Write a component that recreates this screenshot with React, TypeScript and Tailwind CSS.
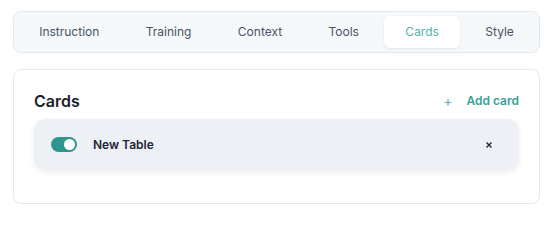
import React from 'react';

const tabs = ['Instruction', 'Training', 'Context', 'Tools', 'Cards', 'Style'];

const App = () => {
  const active = 'Cards';
  return (
    <div className="min-h-screen bg-white pl-[13px] pr-[15px] pt-[11px] font-['Inter','Liberation_Sans',sans-serif]">
      {/* Tabs */}
      <div className="flex gap-1 rounded-lg border border-[#e3e8ee] bg-[#f5f8fb] p-1">
        {tabs.map((t) => (
          <button
            key={t}
            className={`flex-auto rounded-md py-1.5 text-xs leading-5 ${
              t === active
                ? 'bg-white text-[#4fb3b0] shadow-[0_1px_3px_rgba(0,0,0,0.08)]'
                : 'text-[#4b5260]'
            }`}
          >
            {t}
          </button>
        ))}
      </div>

      {/* Cards panel */}
      <div className="mt-4 rounded-lg border border-[#e6e8eb] bg-white px-5 pb-[33px] pt-[19px]">
        <div className="mb-1.5 flex items-center justify-between">
          <h2 className="text-base font-semibold leading-6 text-[#1c1d2b]">Cards</h2>
          <button className="flex items-center gap-3.5 text-xs font-semibold text-[#3a9f9b]">
            <span className="text-sm font-normal text-[#5bb5b0]">+</span>
            Add card
          </button>
        </div>

        <div className="flex h-[51px] items-center rounded-xl bg-[#edf1f5] pl-[17px] pr-[27px] shadow-[0_2px_6px_rgba(0,0,0,0.08)]">
          <div className="flex h-[15px] w-[26px] items-center justify-end rounded-full bg-[#2f968f] pr-[2px]">
            <div className="h-[11px] w-[11px] rounded-full bg-white" />
          </div>
          <span className="ml-4 flex-1 text-xs font-semibold text-[#23243a]">New Table</span>
          <svg width="6" height="6" viewBox="0 0 6 6" className="text-[#1f2430]">
            <path d="M0.5 0.5L5.5 5.5M5.5 0.5L0.5 5.5" stroke="currentColor" strokeWidth="1.4" />
          </svg>
        </div>
      </div>
    </div>
  );
};

export default App;
